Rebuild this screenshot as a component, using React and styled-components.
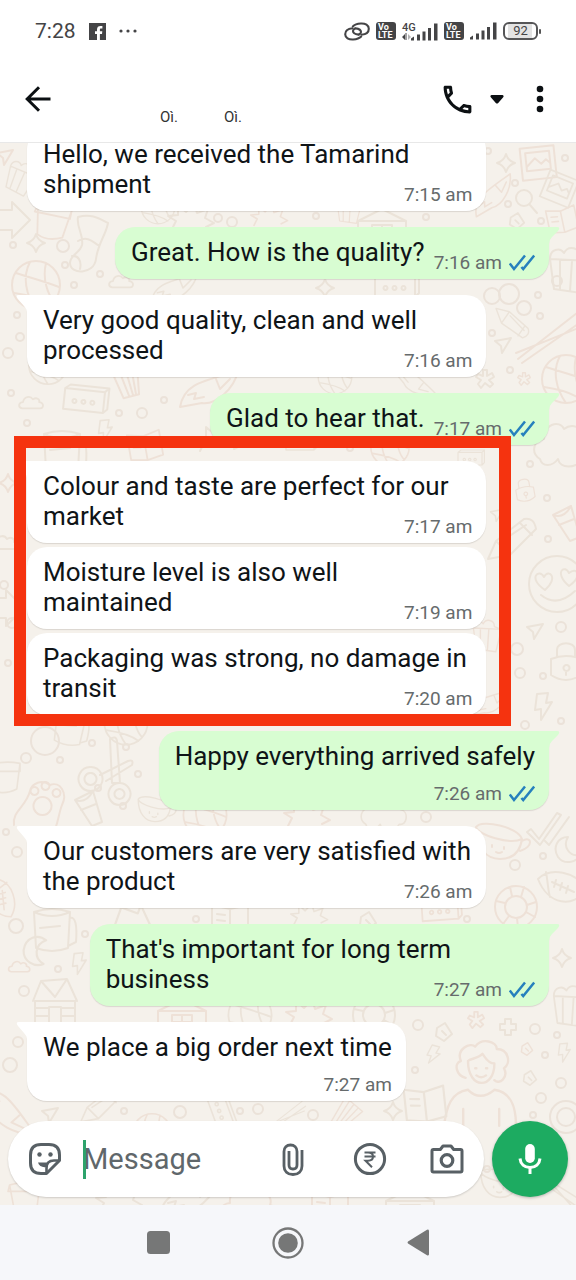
import React from "react";
import styled, { createGlobalStyle, css } from "styled-components";

const GlobalStyle = createGlobalStyle`
  *, *::before, *::after { box-sizing: border-box; }
  body { margin: 0; font-family: Roboto, "Liberation Sans", sans-serif; background: #fff; }
  button { border: 0; padding: 0; background: none; color: inherit; font: inherit; cursor: pointer; }
`;

const Screen = styled.div`
  display: flex;
  flex-direction: column;
  height: 100vh;
  overflow: hidden;
`;

/* ---------- status bar ---------- */

const StatusBar = styled.div`
  display: flex;
  align-items: center;
  justify-content: space-between;
  height: 62px;
  flex: none;
  padding: 0 35px;
  color: #444446;
`;

const StatusGroup = styled.div`
  display: flex;
  align-items: center;
  gap: ${(p) => p.$gap}px;
  svg { display: block; }
`;

const Clock = styled.span`
  font-size: 21px;
  line-height: 24px;
`;

const VoLte = styled.span`
  display: flex;
  flex-direction: column;
  justify-content: center;
  width: 20px;
  height: 18px;
  padding-left: 2px;
  border-radius: 3px;
  background: #444446;
  color: #fff;
  font-size: 9px;
  font-weight: 700;
  line-height: 8px;
`;

const Network = styled.span`
  display: flex;
  align-items: flex-end;
`;

const NetworkLabel = styled.span`
  display: flex;
  flex-direction: column;
  width: 9px;
  font-size: 11px;
  font-weight: 500;
  line-height: 11px;
  white-space: nowrap;
`;

const Battery = styled.span`
  display: flex;
  align-items: center;
  &::after {
    content: "";
    width: 2px;
    height: 5px;
    margin-left: 1px;
    border-radius: 1px;
    background: #555;
  }
`;

const BatteryLevel = styled.span`
  width: 35px;
  height: 18px;
  border: 2px solid #555557;
  border-radius: 6px;
  background: linear-gradient(90deg, #fff 3px, #e3e3e3 3px, #e3e3e3 27px, #fff 27px);
  font-size: 13px;
  line-height: 14px;
  text-align: center;
`;

/* ---------- app bar ---------- */

const AppBar = styled.header`
  display: flex;
  align-items: center;
  flex: none;
  height: 81px;
  padding: 0 14px 6px 20px;
  border-bottom: 1px solid #e8e8e8;
  color: #0c1013;
`;

const IconButton = styled.button`
  display: flex;
  align-items: center;
  justify-content: center;
  flex: none;
  width: ${(p) => p.$width || 36}px;
  height: 37px;
`;

const Contact = styled.div`
  display: flex;
  flex: 1;
  gap: 46px;
  padding: 36px 0 0 104px;
  color: #333;
  font-size: 15px;
  line-height: 18px;
`;

const BarActions = styled.div`
  display: flex;
  align-items: center;
`;

/* ---------- chat ---------- */

const Chat = styled.main`
  position: relative;
  display: flex;
  flex-direction: column;
  flex: 1;
  min-height: 0;
  overflow: hidden;
  background: #f5f1eb;
`;

const Wallpaper = styled.svg`
  position: absolute;
  top: 0;
  left: 0;
  fill: none;
  stroke-width: 2;
  stroke-linecap: round;
  stroke-linejoin: round;
`;

const Messages = styled.div`
  position: relative;
  display: flex;
  flex-direction: column;
  justify-content: flex-end;
  flex: 1;
  min-height: 0;
  gap: 16px;
  padding: 0 27px 20px;
`;

const Highlight = styled.section`
  position: relative;
  display: flex;
  flex-direction: column;
  gap: 4px;
  width: 88%;
  &::after {
    content: "";
    position: absolute;
    inset: -25px -25px -11px -13px;
    border: 12px solid #f5330f;
  }
`;

const Meta = styled.span`
  display: flex;
  align-items: center;
  float: right;
  gap: 7px;
  margin: 16px 4px 0 9px;
  color: #666b6c;
  font-size: 19px;
  line-height: 20px;
  white-space: nowrap;
`;

const Text = styled.p`
  display: flow-root;
  margin: 0;
  font-size: 26px;
  line-height: 30px;
  white-space: pre-line;
`;

const bubbleWidth = { wrapped: "88%", beside: "auto", below: "auto" };

const Bubble = styled.article`
  position: relative;
  flex: none;
  width: ${(p) => (p.$grouped ? "100%" : bubbleWidth[p.$layout])};
  max-width: ${(p) => (p.$grouped ? "100%" : "88%")};
  align-self: ${(p) => (p.$mine ? "flex-end" : "flex-start")};
  padding: 10px 10px 6px 16px;
  border-radius: 20px;
  background: ${(p) => (p.$mine ? "#d8fdd2" : "#fff")};
  box-shadow: 0 1px 1px rgba(60, 50, 40, 0.14);
  color: #0f1417;
  ${(p) => p.$layout === "below" && css`
    ${Text} { display: grid; padding-right: 4px; }
    ${Meta} { justify-self: end; margin: 13px 0 0; }
  `}
  ${(p) => p.$tail && css`
    ${p.$mine ? "border-top-right-radius" : "border-top-left-radius"}: 0;
    &::before {
      content: "";
      position: absolute;
      top: 0;
      ${p.$mine ? "right: -11px" : "left: -11px"};
      width: 12px;
      height: 17px;
      background: inherit;
      clip-path: ${p.$mine
        ? 'path("M0 0H9Q13 0 10 4L4 10Q1 13 1 17H0Z")'
        : 'path("M12 0H3Q-1 0 2 4L8 11Q11 14 11 17H12Z")'};
    }
  `}
`;

/* ---------- composer ---------- */

const Composer = styled.form`
  position: relative;
  display: flex;
  flex: none;
  gap: 8px;
  padding: 0 8px 8px;
`;

const Pill = styled.div`
  display: flex;
  align-items: center;
  flex: 1;
  min-width: 0;
  height: 76px;
  padding: 0 19px;
  border-radius: 38px;
  background: #fff;
  box-shadow: 0 1px 2px rgba(0, 0, 0, 0.16);
  color: #586065;
`;

const Field = styled.label`
  position: relative;
  display: flex;
  flex: 1;
  min-width: 0;
  margin: 0 20px;
  &::before {
    content: "";
    position: absolute;
    top: 0;
    left: 0;
    width: 3px;
    height: 39px;
    background: #2da36c;
  }
`;

const MessageInput = styled.input`
  width: 100%;
  height: 39px;
  border: 0;
  padding: 0;
  outline: 0;
  background: transparent;
  color: #111;
  font: 29px Roboto, "Liberation Sans", sans-serif;
  &::placeholder { color: #60676b; opacity: 1; }
`;

const PillActions = styled.div`
  display: flex;
  gap: 41px;
`;

const MicButton = styled.button`
  display: flex;
  align-items: center;
  justify-content: center;
  flex: none;
  width: 76px;
  height: 76px;
  border-radius: 50%;
  background: #1dab61;
  box-shadow: 0 1px 3px rgba(0, 0, 0, 0.25);
`;

/* ---------- system navigation ---------- */

const SystemNav = styled.nav`
  display: flex;
  justify-content: center;
  flex: none;
  height: 75px;
  background: #f6f7fa;
`;

const NavButton = styled.button`
  display: flex;
  align-items: center;
  justify-content: center;
  width: 130px;
  height: 75px;
`;

/* ---------- icons ---------- */

const Signal = () => (
  <svg width="27" height="18" fill="currentColor" aria-hidden="true">
    <path d="M0 17.5v-2l3-2v4zM6 11.5h3v6H6zM11.500 8.500h3v9h-3zM17 5h3v12.500h-3zM23 0.500h3.500v17H23z" />
  </svg>
);

const Ticks = () => (
  <svg width="26" height="18" viewBox="0 0 26 18" fill="none" stroke="#2680bd" strokeWidth="2.500" aria-label="Read">
    <path d="M.8 9.500 5 15 16 1.500M12.400 13l1.800 2L25.200 1.500" />
  </svg>
);

const FacebookIcon = () => (
  <svg width="17" height="17" viewBox="0 0 17 17" aria-hidden="true">
    <path fill="#444446" d="M0 0h17v17H0z" />
    <path fill="#fff" d="M8 17v-6H6V8.300h2V6.400C8 4 9.400 2.900 11.500 2.900h1.900v2.600H12c-.9 0-1.100.4-1.100 1.200v1.600h2.400L13 11h-2.100v6z" />
  </svg>
);

const LinkIcon = () => (
  <svg width="26" height="19" viewBox="0 0 26 19" fill="none" stroke="currentColor" strokeWidth="2.100" strokeLinecap="round" aria-hidden="true">
    <path d="M8.500 6.200C4 6.600 1.200 9 1.200 12.200c0 3.500 3.500 5.600 8 5.300 3.300-.2 6.300-1.200 8-3M11.500 6.400c3.500.4 5.500 1.800 5.500 3.600 0 1.200-.8 2-2 2.500" />
    <path d="M17.500 12.800c4.500-.4 7.300-2.800 7.300-6 0-3.500-3.500-5.600-8-5.300-3.300.2-6.300 1.200-8 3M14.500 12.600C11 12.200 9 10.800 9 9c0-1.200.8-2 2-2.500" />
  </svg>
);

const BackIcon = () => (
  <svg width="26" height="26" viewBox="0 0 26 26" fill="none" stroke="currentColor" strokeWidth="3" aria-hidden="true">
    <path d="M25.500 13H2.500M14 1.200 2.200 13 14 24.800" />
  </svg>
);

const PhoneIcon = () => (
  <svg width="37" height="37" viewBox="0 0 24 24" fill="currentColor" aria-hidden="true">
    <path d="M6.540 5c.06.89.21 1.760.45 2.590l-1.200 1.200c-.41-1.200-.67-2.470-.76-3.790h1.510m9.860 12.020c.85.24 1.720.39 2.600.45v1.490c-1.320-.09-2.590-.35-3.800-.75l1.200-1.190M7.500 3H4c-.55 0-1 .45-1 1 0 9.390 7.610 17 17 17 .55 0 1-.45 1-1v-3.490c0-.55-.45-1-1-1-1.240 0-2.450-.2-3.570-.57-.1-.04-.21-.05-.31-.05-.26 0-.51.1-.71.29l-2.200 2.200c-2.830-1.450-5.150-3.760-6.590-6.590l2.200-2.200c.28-.28.36-.67.25-1.020C8.700 6.450 8.500 5.250 8.500 4c0-.55-.45-1-1-1z" />
  </svg>
);

const StickerIcon = () => (
  <svg width="34" height="34" viewBox="0 0 34 34" fill="none" stroke="currentColor" strokeWidth="3" strokeLinejoin="round" aria-hidden="true">
    <path d="M18.500 31.500H13C6 31.500 2.500 28 2.500 21v-8C2.500 6 6 2.500 13 2.500h8c7 0 10.500 3.500 10.500 10.500v5.500z" />
    <path d="M18.500 31.500V26c0-5 2.500-7.500 7.500-7.500h5.500" strokeWidth="2.600" />
    <path d="M10 20.500h11.500c-2 1-3 2.500-3.200 4.500-4 .8-7.300-1.200-8.300-4.500z" fill="currentColor" stroke="none" />
    <circle cx="11.500" cy="12.500" r="2.200" fill="currentColor" stroke="none" />
    <circle cx="22.500" cy="12.500" r="2.200" fill="currentColor" stroke="none" />
  </svg>
);

const ClipIcon = () => (
  <svg width="22" height="33" viewBox="0 0 22 33" fill="none" stroke="currentColor" strokeWidth="2.800" aria-hidden="true">
    <path d="M20 7v16c0 5-3.500 8.500-9 8.500S2 28 2 23V8.500C2 4.500 4.700 2 8.500 2S15 4.500 15 8.500V22c0 2.300-1.500 4-4 4s-4-1.700-4-4V8" />
  </svg>
);

const RupeeIcon = () => (
  <svg width="34" height="34" viewBox="0 0 34 34" fill="none" stroke="currentColor" strokeWidth="3" aria-hidden="true">
    <circle cx="17" cy="17" r="14.600" />
    <path d="M11.500 10.500h11M11.500 14.500h11M12 10.500h3c3.500 0 5 1.600 5 4s-1.600 4.200-5 4.200h-2.500l6.500 6.500" strokeWidth="2" />
  </svg>
);

const CameraIcon = () => (
  <svg width="34" height="32" viewBox="0 0 34 32" fill="none" stroke="currentColor" strokeWidth="3" strokeLinejoin="round" aria-hidden="true">
    <path d="M3.500 6.500h6.800L13 3h8l2.700 3.500h6.800q1.500 0 1.500 1.500v19.500q0 1.500-1.500 1.500h-27Q2 29 2 27.500V8q0-1.500 1.500-1.500z" />
    <circle cx="17" cy="17.500" r="5.800" strokeWidth="3.200" />
  </svg>
);

const MicIcon = () => (
  <svg width="24" height="32" viewBox="0 0 24 32" aria-hidden="true">
    <rect x="7.200" y="1" width="9.600" height="19" rx="4.800" fill="#fff" />
    <path d="M2 15.500c.5 5.500 4.500 9 10 9s9.500-3.500 10-9M12 24.500V31" fill="none" stroke="#fff" strokeWidth="3" />
  </svg>
);

/* ---------- wallpaper doodles ---------- */

const shapes = {
  star: <path d="M0-9Q2-2 9 0Q2 2 0 9Q-2 2-9 0Q-2-2 0-9Z" />,
  plane: <path d="M-8-4 8-7-1 8-2 1Z" />,
  bolt: <path d="M-6-13 5-14 3-4 9-5-2 13-2 2-8 3Z" />,
  cloud: <path d="M-11 6C-16 5-15-1-10-1C-9-7-2-9 1-4C5-7 9-4 8-1C14 0 13 6 9 6Z" />,
  diamond: <path d="M-7-4 1-9 8 2 0 9-8 4ZM-2-1 2 3" />,
  plus: <path d="M-3-8H3V-3H8V3H3V8H-3V3H-8V-3H-3Z" />,
  flower: <path d="M-2-9H2V-3L7-6 9-2 4 1 8 5 5 8 0 4-4 9-7 5-4 1-9-2-7-5-2-3Z" />,
  frame: <path d="M-17-14H17V18H-17ZM-12-9H12V9H-12ZM-12 5-3-3 3 3 8-1 12 3" />,
  book: <path d="M-18-14 0-10 18-14V14L0 17-18 14ZM0-10V17M-13-5-5-4M-13 1-5 2" />,
  cassette: <path d="M-20-11H20V10H-20ZM-20-11-15-15H24V6L20 10M20-11 24-15M-10-1a2 2 0 1 0 1 0M-1-1a2 2 0 1 0 1 0M8-1a2 2 0 1 0 1 0" />,
  ball: <path d="M-24 0A24 24 0 1 0 24 0A24 24 0 1 0-24 0M-20-12C-8-8 8-4 23 2M-22 8C-8 10 6 14 14 20M-6-23C-14-8-10 10 0 24M10-22C6-6 12 10 18 16" />,
  lock: <path d="M-15-4Q0-10 15-4V12Q0 22-15 12ZM-9-6V-13C-9-22 9-22 9-13V-6M0 2a3 3 0 1 0 1 0M0 8V12" />,
  love: <path d="M-28 0A28 28 0 1 0 28 0A28 28 0 1 0-28 0M-12 6C-30-6-18-16-13-7C-8-16 2-6-12 6M12 2C-4-12 8-20 12-11C20-18 26-8 12 2M-16 11Q0 24 18 7" />,
  cup: <path d="M-24-14C-18-22 18-14 22-2C10 4-22-6-24-14C-24 6-14 18 0 18C12 18 20 12 22-2M22 0C32-6 34 6 20 10M-8 4V6M4 6V8M-4 11Q-1 13 2 11" />,
  football: <path d="M-22-8C-10-20 16-16 26 2C14 22-12 18-22-8ZM-14-15C-12-4-12 4-10 10M-8-5 14 5M-4-7-6 0M2-4 0 3M8-1 6 6" />,
  buoy: <path d="M-21 0A21 21 0 1 0 21 0A21 21 0 1 0-21 0M-11 0A11 11 0 1 0 11 0A11 11 0 1 0-11 0M-20-6-11-4M-6-20-4-11M8-20 5-10M20-5 11-2M19 10 10 5M2 21 1 11M-13 17-7 9" />,
  sock: <path d="M-14-34C0-38 8-32 16-28C14-16 6-8 4 8C2 24-22 24-22 12C-22 4-12 2-10-6C-8-16-16-24-14-34ZM-14-10C-4-16 2-8 6-6M-20 5C-14 4-10 10-12 18" />,
  sun: <path d="M-20 8-16 0-24-5-14-6-14-16-6-9 2-18 5-8 16-12 13-3 22 2 14 6" />,
  scissors: <path d="M-16 0a12 12 0 1 0 1 0M-16 6a6 6 0 1 0 1 0M13 16a11 11 0 1 0 1 0M13 22a5 5 0 1 0 1 0M-6 8 22-6Q28-8 26-2L0 14M4-28Q10-32 11-26L14 16 6 16Z" />,
  bear: <path d="M-28 24C-30 10-16 6-12-10C-10-18 0-22 8-16C18-20 26-8 20 4C16 14 16 26 10 34M0-4a9 9 0 1 0 1 0M-8-14a4 4 0 1 0 1 0M3-19a4 4 0 1 0 1 0M14-12a4 4 0 1 0 1 0" />,
  mug: <path d="M-18-14Q0-20 18-14L16 22Q0 28-16 22ZM-18-14Q0-6 18-14M18-8Q26-10 24 16L16 20M-12 2 8 0" />,
  glass: <path d="M-13-8 5-17 14 14 4 18ZM-13-8Q-2-4 5-17M-7 2 8-4" />,
  cabin: <path d="M-22 0-14-20 12-22 22 0M-20 0H20V22H-20ZM-6 6H6V22H-6ZM-20 7H-6M-20 15H-6M6 7H20M6 15H20M-14-20 0-4 12-22" />,
  house: <path d="M-24 14V-4L0-16 24-4V14ZM-10 0H10V14H-10ZM0 0V14M-10 7H10M-24-4H24" />,
  popcorn: <path d="M-18-10C-18-20-8-22-4-16C0-24 12-22 12-12L22-8 14 24-14 20ZM-18-10 22-8M-8-8-8 20M4-8 2 22" />,
  pencil: <path d="M-24 16-16-2 12-24Q22-26 24-14L-2 12ZM-16-2-2 12M8-20 20-8M-10-2 14-18" />,
  fish: <path d="M-30 18C-26-6-6-8 28-18C24 0 6 16-8 14L-30 18ZM-22 6-14 4-16 10-6 8M6-10 10 0 20-10" />,
  pot: <path d="M-18-10Q0-16 20-12L16 20Q0 28-12 22ZM-18-10-20-2 20-2V-12" />,
  girl: <path d="M-12 4C-20 2-22-8-16-10C-20-20-8-26-4-22C2-30 14-26 14-20C24-20 26-8 20-4C24 4 16 10 12 6M-10-10C-10 14 12 14 12-8C6-8 4-14 2-16C-2-12-8-12-10-10M-4-4H-3M5-4H6M-3 2Q1 5 5 2M-10 14C-24 16-28 28-30 44M12 14C26 16 30 28 30 44M-10 14Q0 24 12 14M-14 30V44M16 30V44" />,
  tree: <path d="M-24 14C-34 8-30-6-20-6C-22-20-4-26 0-16C10-24 24-14 20-4C30-2 28 16 18 14C12 24-4 24-6 14C-12 22-22 22-24 14Z" />,
  fries: <path d="M-16-20-8 26H8L16-20ZM-8-20-2 26M0-20 2 26M8-20 5 26" />,
  arrow: <path d="M-14-10H2V-18L20 0 2 18V10H-14Z" />,
  sticks: <path d="M-34 24 30-26M-30 28 36-18M-36 18 34-10" />,
  check: <path d="M-14 2-6 12 12-14 16-12-5 18-18 5ZM0 14 4 18 24-10" />,
  moon: <path d="M2-12C-8-12-14-2-8 8C-2 16 10 14 14 6C4 8-4-2 2-12Z" />,
  lens: <path d="M-8-3a8 8 0 1 0 16 0a8 8 0 1 0-16 0M6 4 13 12" />,
};

const rings = [
  [63, 103, 6], [13, 102, 3], [65, 122, 3], [100, 131, 3], [74, 142, 3], [218, 75, 4], [232, 79, 5], [17, 172, 3],
  [20, 194, 4], [8, 210, 5], [11, 250, 3], [119, 270, 3], [142, 270, 5], [164, 257, 3], [27, 280, 3], [488, 8, 3],
  [515, 40, 3], [565, 15, 3], [508, 61, 3], [541, 78, 3], [316, 73, 3], [426, 74, 3], [538, 152, 3], [557, 138, 5],
  [492, 153, 8], [509, 151, 10], [524, 165, 7], [540, 173, 3], [492, 190, 3], [510, 227, 3], [530, 321, 3], [547, 355, 3],
  [548, 396, 3], [561, 484, 5], [517, 506, 6], [520, 530, 5], [543, 533, 3], [561, 578, 3], [525, 582, 4], [45, 598, 14],
  [92, 600, 3], [126, 604, 3], [60, 617, 3], [26, 615, 5], [138, 631, 3], [98, 645, 3], [123, 663, 3], [6, 689, 3],
  [17, 709, 5], [16, 783, 7], [85, 791, 3], [58, 826, 3], [24, 848, 5], [18, 899, 5], [10, 922, 7], [196, 776, 3],
  [426, 674, 5], [515, 722, 5], [543, 713, 3], [467, 776, 3], [418, 882, 5], [535, 886, 5], [557, 892, 3], [545, 912, 3],
  [561, 940, 5], [415, 927, 3], [541, 955, 5], [124, 968, 3], [180, 969, 6], [240, 968, 3], [258, 966, 5], [313, 972, 5],
  [533, 972, 3], [566, 974, 16], [566, 974, 9], [487, 1026, 3], [4, 442, 4], [8, 520, 3], [12, 480, 5], [350, 305, 3],
];

const doodles = [
  ["plane", 5, 14], ["popcorn", 20, 34, 0.7, 20], ["arrow", 10, 77], ["pot", 52, 74, 0.9, 12], ["sock", 92, 108], ["star", 36, 100],
  ["ball", 36, 142], ["cloud", 122, 139, 0.9], ["sun", 192, 78], ["fries", 125, 228, 1, -14], ["cloud", 32, 260, 0.9], ["cassette", 84, 258, 1, 6],
  ["fish", 210, 246], ["bolt", 105, 288, 0.8], ["mug", 62, 305], ["book", 145, 302, 0.9, -10], ["ball", 48, 222, 0.8], ["fish", 175, 145, 0.8],
  ["sun", 270, 76, 0.8], ["ball", 158, 64, 0.7], ["house", 382, 82], ["popcorn", 348, 66, 0.6], ["cassette", 395, 144], ["star", 325, 145],
  ["frame", 538, 18, 1, -6], ["frame", 560, 44, 0.9, 22], ["star", 506, 20], ["fish", 494, 52, 0.8, -20], ["lens", 524, 58], ["diamond", 517, 78, 0.9],
  ["book", 562, 76, 0.8, -12], ["popcorn", 568, 126], ["pencil", 510, 180, 0.7, 80], ["sticks", 552, 192], ["plane", 503, 202, 1], ["flower", 485, 236, 1],
  ["ball", 566, 236], ["ball", 335, 234, 0.7], ["fish", 415, 240, 0.7, 60], ["flower", 524, 236, 0.7], ["tree", 564, 302], ["cassette", 470, 316, 0.6],
  ["lock", 525, 348, 0.6, -10], ["plane", 497, 372, 0.8], ["pencil", 512, 400], ["glass", 566, 380], ["love", 557, 441], ["plane", 535, 488],
  ["popcorn", 486, 492, 0.7], ["lock", 566, 520], ["bolt", 543, 564], ["star", 8, 340], ["cloud", 6, 400], ["arrow", 4, 465],
  ["fish", 490, 560, 0.7], ["mug", 70, 582, 0.8, 10], ["scissors", 106, 624], ["bear", 42, 658], ["glass", 88, 665], ["cup", 155, 666, 0.7],
  ["ball", 205, 672, 0.9], ["pot", 4, 630, 0.8], ["ball", 126, 580, 0.9], ["sun", 308, 675], ["tree", 385, 670, 0.8], ["check", 545, 684],
  ["cup", 500, 698], ["moon", 566, 706], ["football", 560, 744], ["buoy", 516, 764], ["diamond", 368, 778], ["sun", 310, 775, 0.8],
  ["cassette", 440, 768, 0.9, -4], ["mug", 52, 783], ["moon", 36, 806, 1.1, 40], ["cloud", 20, 824, 0.8], ["bolt", 79, 821, 0.8], ["cabin", 55, 858],
  ["football", 2, 755, 0.8, 60], ["book", 230, 776], ["arrow", 132, 780, 1.1, 20], ["house", 182, 872], ["ball", 250, 872, 0.9], ["buoy", 374, 872],
  ["sun", 310, 874], ["star", 562, 815], ["popcorn", 570, 862, 0.9], ["flower", 476, 877, 0.9], ["plus", 508, 884], ["diamond", 444, 889, 1],
  ["diamond", 527, 906, 0.7], ["bolt", 564, 910, 0.7], ["diamond", 530, 935, 0.8], ["girl", 480, 930, 1.2], ["bolt", 433, 912, 0.7, 20], ["book", 425, 960, 1.1, -6],
  ["fish", 8, 970, 1, 70], ["plane", 50, 972], ["pencil", 100, 966, 0.8], ["ball", 152, 990, 0.8], ["cassette", 220, 968, 0.8, 70], ["sticks", 284, 974, 0.6],
  ["fries", 345, 972, 0.7, 40], ["star", 393, 968], ["cup", 500, 1040, 0.8], ["pot", 24, 1050, 0.8], ["sun", 120, 1060], ["fish", 190, 1054],
  ["book", 330, 1064], ["house", 410, 1062], ["sticks", 560, 1046, 0.8, 70], ["tree", 250, 1066], ["sun", 220, 300], ["cassette", 300, 300, 0.7], ["ball", 390, 304, 0.8],
];

const Doodles = () => (
  <Wallpaper width="100%" height="100%" aria-hidden="true">
    {rings.map(([x, y, r], i) => (
      <circle key={i} cx={x} cy={y} r={r} stroke="#ebe2d9" />
    ))}
    {doodles.map(([name, x, y, scale = 1, turn = 0], i) => (
      <g key={i} transform={`translate(${x} ${y}) rotate(${turn}) scale(${scale})`} stroke={i % 3 ? "#ebe3d9" : "#eee1d7"}>
        {shapes[name]}
      </g>
    ))}
  </Wallpaper>
);

/* ---------- content ---------- */

const Message = ({ text, time, mine, tail, layout = "wrapped", grouped }) => (
  <Bubble $mine={mine} $tail={tail} $layout={layout} $grouped={grouped}>
    <Text>
      {text}
      <Meta>
        <time>{time}</time>
        {mine && <Ticks />}
      </Meta>
    </Text>
  </Bubble>
);

export default function App() {
  return (
    <Screen>
      <GlobalStyle />
      <StatusBar>
        <StatusGroup $gap={13}>
          <Clock>7:28</Clock>
          <FacebookIcon />
          <svg width="20" height="4" fill="#444446" aria-hidden="true">
            <circle cx="2" cy="2" r="1.600" />
            <circle cx="9" cy="2" r="1.600" />
            <circle cx="16" cy="2" r="1.600" />
          </svg>
        </StatusGroup>
        <StatusGroup $gap={6}>
          <LinkIcon />
          <VoLte><span>Vo</span><span>LTE</span></VoLte>
          <Network>
            <NetworkLabel>
              4G
              <svg width="9" height="8" fill="currentColor" aria-hidden="true">
                <path d="M0 4l3-3v6zM3.500 0h1v7h-1z" />
                <path d="M9 4 6 1v6z" opacity=".4" />
              </svg>
            </NetworkLabel>
            <Signal />
          </Network>
          <VoLte><span>Vo</span><span>LTE</span></VoLte>
          <Signal />
          <Battery><BatteryLevel>92</BatteryLevel></Battery>
        </StatusGroup>
      </StatusBar>

      <AppBar>
        <IconButton aria-label="Back"><BackIcon /></IconButton>
        <Contact><span>Oì.</span><span>Oì.</span></Contact>
        <BarActions>
          <IconButton $width={38} aria-label="Call"><PhoneIcon /></IconButton>
          <IconButton $width={42} aria-label="Call options">
            <svg width="14" height="9" fill="currentColor" aria-hidden="true"><path d="M1.500 0h11q2 1 .5 2.500L8.200 8Q7 9 5.800 8L1 2.500Q-.5 1 1.500 0z" /></svg>
          </IconButton>
          <IconButton $width={44} aria-label="More">
            <svg width="8" height="28" fill="currentColor" aria-hidden="true">
              <circle cx="4" cy="4" r="3.300" />
              <circle cx="4" cy="14" r="3.300" />
              <circle cx="4" cy="24" r="3.300" />
            </svg>
          </IconButton>
        </BarActions>
      </AppBar>

      <Chat>
        <Doodles />
        <Messages>
          <Message text={"Hello, we received the Tamarind\nshipment"} time="7:15 am" />
          <Message mine tail layout="beside" text="Great. How is the quality?" time="7:16 am" />
          <Message tail text={"Very good quality, clean and well\nprocessed"} time="7:16 am" />
          <Message mine tail layout="beside" text="Glad to hear that." time="7:17 am" />
          <Highlight>
            <Message grouped tail text={"Colour and taste are perfect for our\nmarket"} time="7:17 am" />
            <Message grouped text={"Moisture level is also well\nmaintained"} time="7:19 am" />
            <Message grouped text={"Packaging was strong, no damage in\ntransit"} time="7:20 am" />
          </Highlight>
          <Message mine tail layout="below" text="Happy everything arrived safely" time="7:26 am" />
          <Message tail text={"Our customers are very satisfied with\nthe product"} time="7:26 am" />
          <Message mine tail text={"That's important for long term\nbusiness"} time="7:27 am" />
          <Message tail layout="below" text="We place a big order next time" time="7:27 am" />
        </Messages>
        <Composer onSubmit={(e) => e.preventDefault()}>
          <Pill>
            <IconButton type="button" aria-label="Stickers"><StickerIcon /></IconButton>
            <Field><MessageInput type="text" placeholder="Message" aria-label="Message" /></Field>
            <PillActions>
              <IconButton type="button" aria-label="Attach"><ClipIcon /></IconButton>
              <IconButton type="button" aria-label="Payment"><RupeeIcon /></IconButton>
              <IconButton type="button" aria-label="Camera"><CameraIcon /></IconButton>
            </PillActions>
          </Pill>
          <MicButton type="button" aria-label="Record voice message"><MicIcon /></MicButton>
        </Composer>
      </Chat>

      <SystemNav>
        <NavButton aria-label="Recent apps">
          <svg width="23" height="23" aria-hidden="true"><rect width="23" height="23" rx="3.500" fill="#767777" /></svg>
        </NavButton>
        <NavButton aria-label="Home">
          <svg width="32" height="32" aria-hidden="true">
            <circle cx="16" cy="16" r="14.500" fill="none" stroke="#767777" strokeWidth="2.300" />
            <circle cx="16" cy="16" r="9.800" fill="#767777" />
          </svg>
        </NavButton>
        <NavButton aria-label="Back">
          <svg width="22" height="27" aria-hidden="true"><path d="M22 1.500v24q-.5 1.500-2 .7L1 14.500Q0 13.500 1 12.500L20 .8q1.500-.8 2 .7z" fill="#767777" /></svg>
        </NavButton>
      </SystemNav>
    </Screen>
  );
}
